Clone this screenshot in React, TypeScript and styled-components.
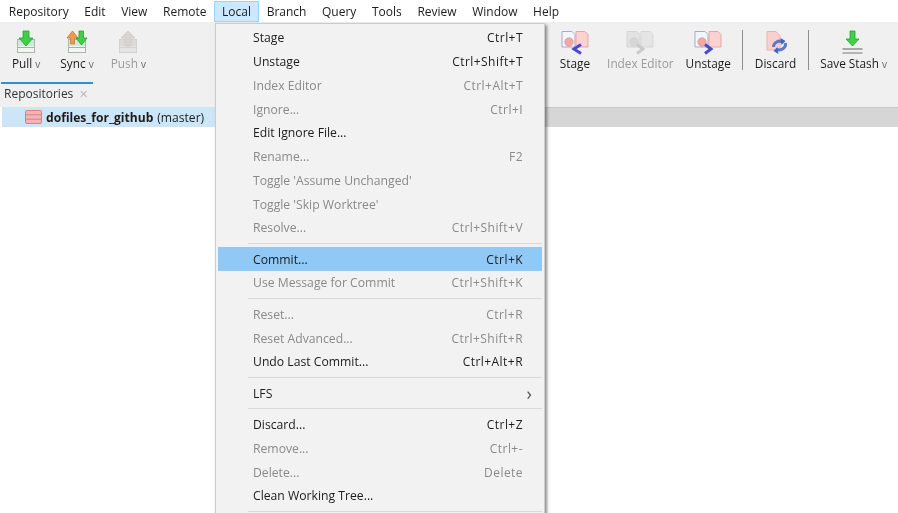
import styled, { createGlobalStyle } from 'styled-components';

const GlobalStyle = createGlobalStyle`
  html, body {
    margin: 0;
    padding: 0;
    background: #ffffff;
  }
  body {
    font-family: "Open Sans", "Noto Sans", "Liberation Sans", sans-serif;
    font-size: 12px;
    color: #1c1c1c;
  }
`;

type MenuEntry =
  | { kind: 'sep' }
  | { kind: 'item'; label: string; keys?: string; off?: boolean; hot?: boolean; sub?: boolean };

const item = (label: string, keys?: string, off?: boolean, hot?: boolean): MenuEntry => ({
  kind: 'item',
  label,
  keys,
  off,
  hot,
});

const sep: MenuEntry = { kind: 'sep' };

const MENU: MenuEntry[] = [
  item('Stage', 'Ctrl+T'),
  item('Unstage', 'Ctrl+Shift+T'),
  item('Index Editor', 'Ctrl+Alt+T', true),
  item('Ignore...', 'Ctrl+I', true),
  item('Edit Ignore File...'),
  item('Rename...', 'F2', true),
  item("Toggle 'Assume Unchanged'", undefined, true),
  item("Toggle 'Skip Worktree'", undefined, true),
  item('Resolve...', 'Ctrl+Shift+V', true),
  sep,
  item('Commit...', 'Ctrl+K', false, true),
  item('Use Message for Commit', 'Ctrl+Shift+K', true),
  sep,
  item('Reset...', 'Ctrl+R', true),
  item('Reset Advanced...', 'Ctrl+Shift+R', true),
  item('Undo Last Commit...', 'Ctrl+Alt+R'),
  sep,
  { kind: 'item', label: 'LFS', sub: true },
  sep,
  item('Discard...', 'Ctrl+Z'),
  item('Remove...', 'Ctrl+-', true),
  item('Delete...', 'Delete', true),
  item('Clean Working Tree...'),
  sep,
];

const MENU_BAR = ['Repository', 'Edit', 'View', 'Remote', 'Local', 'Branch', 'Query', 'Tools', 'Review', 'Window', 'Help'];

function TrayIcon({ grey }: { grey?: boolean }) {
  return (
    <>
      <rect x="2.5" y="9.5" width="17" height="13" fill={grey ? '#e2e2e2' : '#f2f5f2'} stroke={grey ? '#cfcfcf' : '#a9b5ad'} />
      <rect x="3" y="10" width="16" height="6" fill={grey ? '#d8d8d8' : '#cfeadb'} />
      <line x1="3" y1="17.5" x2="19" y2="17.5" stroke={grey ? '#cfcfcf' : '#9fb2a6'} />
    </>
  );
}

function PullIcon() {
  return (
    <svg width="22" height="25" viewBox="0 0 22 25">
      <TrayIcon />
      <path d="M8 1h6v7h4l-7 8-7-8h4z" fill="#3ed045" stroke="#2a9d36" strokeWidth="0.8" />
    </svg>
  );
}

function SyncIcon() {
  return (
    <svg width="22" height="25" viewBox="0 0 22 25">
      <TrayIcon />
      <path d="M4.5 14V8H1l5.5-7L12 8H8.5v6z" fill="#ef9a50" stroke="#c97a35" strokeWidth="0.8" />
      <path d="M13 1h4.500v7H21l-5.500 7-5.500-7h3z" fill="#3ed045" stroke="#2a9d36" strokeWidth="0.8" />
    </svg>
  );
}

function PushIcon() {
  return (
    <svg width="22" height="25" viewBox="0 0 22 25">
      <TrayIcon grey />
      <path d="M8 16V8H4l7-7 7 7h-4v8z" fill="#d5d0cb" stroke="#c9c5c1" strokeWidth="0.8" />
    </svg>
  );
}

function DocPairIcon({ dir, grey }: { dir: 'left' | 'right'; grey?: boolean }) {
  const arrow = dir === 'left' ? 'M20 14.500l-7 4.500 7 4.500' : 'M11 14.500l6 4.500-6 4.500';
  return (
    <svg width="28" height="25" viewBox="0 0 28 25">
      <path d="M1 1.500h10l3 3V17H1z" fill={grey ? '#e0e0e0' : '#f4f4fb'} stroke={grey ? '#d0d0d0' : '#a9a9cf'} />
      <circle cx="8" cy="12" r="4.200" fill={grey ? '#d2d2d2' : '#f2a9a4'} stroke={grey ? '#c8c8c8' : '#d98a86'} strokeWidth="0.6" />
      <path d="M15 1.500h9l3 3V17H15z" fill={grey ? '#e4e4e4' : '#fcd2d0'} stroke={grey ? '#d2d2d2' : '#e4a9a6'} />
      <path d={arrow} fill="none" stroke={grey ? '#c4c4c4' : '#4a4ad0'} strokeWidth="3" />
    </svg>
  );
}

function DiscardIcon() {
  return (
    <svg width="24" height="25" viewBox="-1.500 0 24 25">
      <path d="M1.500 1.500h9l4 4V20h-13z" fill="#fbd0cc" stroke="#e8b4b0" />
      <path d="M8 17a6 6 0 0 1 9-5" fill="none" stroke="#5a78cc" strokeWidth="3" />
      <path d="M20 13a6 6 0 0 1-9 6" fill="none" stroke="#5a78cc" strokeWidth="3" />
      <path d="M15 8l5 3-4 4zM13 24l-5-3 4-4z" fill="#4464c0" />
    </svg>
  );
}

function StashIcon() {
  return (
    <svg width="24" height="25" viewBox="1.500 0 24 25">
      <path d="M9.500 1h5v8h4l-6.500 7-6.500-7h4z" fill="#3ed045" stroke="#2a9d36" strokeWidth="0.8" />
      <rect x="2" y="18" width="20" height="2" fill="#a8a8a8" />
      <rect x="2" y="22" width="20" height="2" fill="#b4b4b4" />
    </svg>
  );
}

function RepoIcon() {
  return (
    <svg width="17" height="14" viewBox="0 0 17 14">
      <rect x="0.500" y="0.500" width="16" height="13" rx="1.500" fill="#f5b5b5" stroke="#d98080" />
      <line x1="1" y1="4.800" x2="16" y2="4.800" stroke="#d98080" />
      <line x1="1" y1="9.200" x2="16" y2="9.200" stroke="#d98080" />
    </svg>
  );
}

export default function App() {
  return (
    <Page>
      <GlobalStyle />
      <MenuBar>
        {MENU_BAR.map((name) => (
          <MenuBarItem key={name} $open={name === 'Local'}>
            {name}
          </MenuBarItem>
        ))}
      </MenuBar>

      <Toolbar>
        <ToolRow>
          <ToolGroup>
            <ToolButton $gap={0}>
              <PullIcon />
              <ToolLabel>
                Pull <Caret>v</Caret>
              </ToolLabel>
            </ToolButton>
            <ToolButton $gap={20}>
              <SyncIcon />
              <ToolLabel>
                Sync <Caret>v</Caret>
              </ToolLabel>
            </ToolButton>
            <ToolButton $gap={17} $off>
              <PushIcon />
              <ToolLabel>
                Push <Caret>v</Caret>
              </ToolLabel>
            </ToolButton>
          </ToolGroup>
          <ToolGroup>
            <ToolButton $gap={0}>
              <DocPairIcon dir="left" />
              <ToolLabel>Stage</ToolLabel>
            </ToolButton>
            <ToolButton $gap={17} $off>
              <DocPairIcon dir="right" grey />
              <ToolLabel>Index Editor</ToolLabel>
            </ToolButton>
            <ToolButton $gap={12}>
              <DocPairIcon dir="right" />
              <ToolLabel>Unstage</ToolLabel>
            </ToolButton>
            <ToolDivider />
            <ToolButton $gap={0}>
              <DiscardIcon />
              <ToolLabel>Discard</ToolLabel>
            </ToolButton>
            <ToolDivider />
            <ToolButton $gap={0}>
              <StashIcon />
              <ToolLabel>
                Save Stash <Caret>v</Caret>
              </ToolLabel>
            </ToolButton>
          </ToolGroup>
        </ToolRow>
        <TabStrip>
          <Tab>
            Repositories
            <TabClose>✕</TabClose>
          </Tab>
        </TabStrip>
      </Toolbar>

      <Workspace>
        <RepoRow>
          <RepoIcon />
          <RepoName>dofiles_for_github</RepoName>
          <RepoBranch>(master)</RepoBranch>
        </RepoRow>
        <HeaderStrip />
      </Workspace>

      <DropMenu>
        {MENU.map((entry, i) =>
          entry.kind === 'sep' ? (
            <MenuSep key={i} />
          ) : (
            <MenuItem key={entry.label} $off={entry.off} $hot={entry.hot}>
              <span>{entry.label}</span>
              {entry.keys && <MenuKeys>{entry.keys}</MenuKeys>}
              {entry.sub && <SubArrow>›</SubArrow>}
            </MenuItem>
          ),
        )}
      </DropMenu>
    </Page>
  );
}

const Page = styled.div`
  position: relative;
  width: 898px;
  height: 513px;
  overflow: hidden;
  background: #ffffff;
  filter: blur(0.35px);
`;

const MenuBar = styled.div`
  display: flex;
  align-items: center;
  height: 22px;
  padding-left: 1px;
  background: #ffffff;
`;

const MenuBarItem = styled.div<{ $open?: boolean }>`
  display: flex;
  align-items: center;
  height: 21px;
  margin-top: 1px;
  padding: 0 7.800px;
  box-sizing: border-box;
  white-space: nowrap;
  background: ${(p) => (p.$open ? '#cce8ff' : 'transparent')};
  box-shadow: ${(p) => (p.$open ? 'inset 0 0 0 1px #99d1ff' : 'none')};
`;

const Toolbar = styled.div`
  display: flex;
  flex-direction: column;
  height: 85px;
  background: #f0f0f0;
`;

const ToolRow = styled.div`
  display: flex;
  justify-content: space-between;
  height: 60px;
  padding: 8px 11px 0 12px;
  box-sizing: border-box;
`;

const ToolGroup = styled.div`
  display: flex;
  align-items: flex-start;
`;

const ToolButton = styled.div<{ $gap: number; $off?: boolean }>`
  display: flex;
  flex-direction: column;
  align-items: center;
  margin-left: ${(p) => p.$gap}px;
  color: ${(p) => (p.$off ? '#9a9a9a' : '#1c1c1c')};
  svg {
    opacity: ${(p) => (p.$off ? 0.85 : 1)};
  }
`;

const ToolLabel = styled.div`
  font-size: 11.800px;
  line-height: 16px;
  white-space: nowrap;
`;

const Caret = styled.span`
  font-size: 10px;
  color: #666666;
`;

const ToolDivider = styled.div`
  width: 1px;
  height: 40px;
  margin: 0 11.500px;
  background: #8e8e8e;
`;

const TabStrip = styled.div`
  display: flex;
  height: 25px;
  padding-left: 1px;
`;

const Tab = styled.div`
  display: flex;
  align-items: center;
  width: 92px;
  padding: 0 0 4px 3px;
  box-sizing: border-box;
  border-top: 2px solid #2e8fd6;
  color: #333333;
  white-space: nowrap;
`;

const TabClose = styled.span`
  margin-left: 6px;
  font-size: 11px;
  color: #b8b8b8;
`;

const Workspace = styled.div`
  display: grid;
  grid-template-columns: 215px 1fr;
  height: 20px;
`;

const RepoRow = styled.div`
  display: flex;
  align-items: center;
  margin-left: 2px;
  padding-left: 23px;
  background: #cde6f7;
  white-space: nowrap;
`;

const RepoName = styled.span`
  margin-left: 4px;
  font-weight: 700;
  font-size: 12.100px;
`;

const RepoBranch = styled.span`
  margin-left: 4px;
  font-size: 12.100px;
`;

const HeaderStrip = styled.div`
  background: #d6d6d6;
  border-top: 1px solid #c8c8c8;
`;

const DropMenu = styled.div`
  position: absolute;
  left: 215px;
  top: 23px;
  width: 330px;
  height: 500px;
  padding: 2px;
  box-sizing: border-box;
  background: #f2f2f2;
  border: 1px solid #cccccc;
  box-shadow: 2px 2px 3px rgba(0, 0, 0, 0.45);
`;

const MenuItem = styled.div<{ $off?: boolean; $hot?: boolean }>`
  display: flex;
  align-items: center;
  justify-content: space-between;
  height: 23.750px;
  padding: 0 19px 0 35px;
  font-size: 12.200px;
  white-space: nowrap;
  color: ${(p) => (p.$off ? '#8a8a8a' : '#1c1c1c')};
  background: ${(p) => (p.$hot ? '#90c8f6' : 'transparent')};
`;

const MenuKeys = styled.span`
  font-size: 12px;
  letter-spacing: 0.450px;
`;

const SubArrow = styled.span`
  margin-right: -9px;
  font-size: 18px;
  line-height: 16px;
  color: #555555;
`;

const MenuSep = styled.div`
  height: 1px;
  margin: 3.300px 0 3.300px 30px;
  background: #d9d9d9;
`;
